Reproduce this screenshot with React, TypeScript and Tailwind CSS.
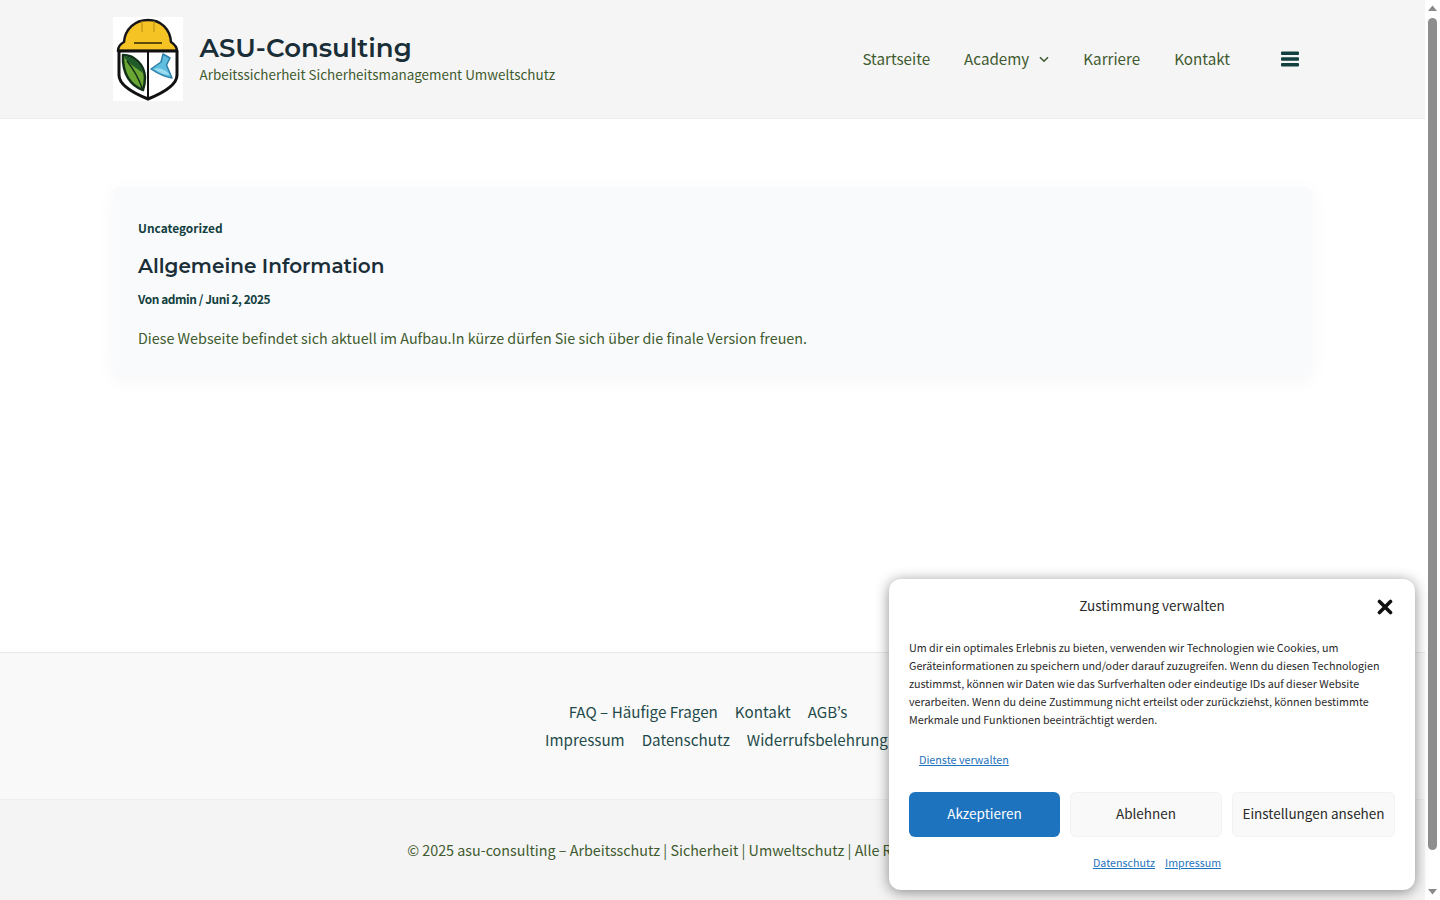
const sans = "font-['Noto_Sans_CJK_KR','Noto_Sans',sans-serif]";

function Logo() {
  return (
    <div className="flex h-[84px] w-[70px] shrink-0 items-center justify-center bg-white">
      <svg width="70" height="84" viewBox="0 0 70 84">
        <path d="M5 34 C5 30 7 27 11 25 C12 12 22 3 35 3 C48 3 57 12 58 25 C61 27 64 30 64 34 Z" fill="#f6c325" stroke="#16161a" strokeWidth="2.5" strokeLinejoin="round" />
        <path d="M29 4 L29 15 M41 4 L41 15" stroke="#c2951b" strokeWidth="1.2" />
        <path d="M21 26 H49" stroke="#5f4b0e" strokeWidth="2" />
        <path d="M6 34 H64 V58 C64 68 50 76 35 82 C20 76 6 68 6 58 Z" fill="#ffffff" stroke="#111114" strokeWidth="3" strokeLinejoin="round" />
        <path d="M35 34 V81" stroke="#111114" strokeWidth="2" />
        <path d="M10 38 C21 38 31 47 32 60 C32 66 31 70 30 73 C18 69 9 57 10 38 Z" fill="#6aa733" stroke="#12301a" strokeWidth="2.5" strokeLinejoin="round" />
        <path d="M11 39 C21 40 28 47 30 56 C22 50 14 46 11 39 Z" fill="#1f5a2b" />
        <path d="M14 44 C21 53 26 62 29 71" stroke="#12301a" strokeWidth="1.4" fill="none" />
        <path d="M50 37 L57 41 L53.5 48 L59 61 C52 60 44 56 38 52 L48 45 Z" fill="#5fbde0" stroke="#2c7fa6" strokeWidth="1.5" strokeLinejoin="round" />
        <path d="M41 52 C46 50 52 52 57 58 C51 58 46 55 41 52 Z" fill="#9adcf0" />
      </svg>
    </div>
  );
}

function Scrollbar() {
  return (
    <div className="flex h-[900px] w-[15px] shrink-0 flex-col items-center bg-white">
      <svg width="15" height="15" viewBox="0 0 15 15" className="shrink-0">
        <path d="M3 11 L7.5 5.5 L12 11 Z" fill="#8a8a8a" />
      </svg>
      <div className="mt-[3px] h-[832px] w-[9px] shrink-0 rounded-full bg-[#8e8e8e]" />
      <div className="flex-1" />
      <svg width="15" height="15" viewBox="0 0 15 15" className="shrink-0">
        <path d="M3 4 L7.5 9.5 L12 4 Z" fill="#8a8a8a" />
      </svg>
    </div>
  );
}

function Header() {
  return (
    <header className="flex h-[119px] items-center justify-between border-b border-[#eeeeee] bg-[#f5f5f5] pl-[113px] pr-[126px]">
      <div className="flex items-center gap-[16px]">
        <Logo />
        <div>
          <div className="pl-[0.5px] font-['Montserrat','Inter',sans-serif] text-[26px] font-semibold leading-[30px] text-[#1a2e38]">ASU-Consulting</div>
          <div className="pl-[0.5px] text-[13.45px] leading-[22px] text-[#3f5a2f]">Arbeitssicherheit Sicherheitsmanagement Umweltschutz</div>
        </div>
      </div>
      <nav className="flex items-center text-[15.2px] text-[#3f5a2f]">
        <a className="mr-[34px] pb-[2px]">Startseite</a>
        <a className="mr-[34px] flex items-center gap-[10px] pb-[2px]">
          Academy
          <svg className="mt-[4px]" width="10" height="7" viewBox="0 0 10 7" fill="none" stroke="#3f5a2f" strokeWidth="1.6"><path d="M1 1.2 L5 5.2 L9 1.2" /></svg>
        </a>
        <a className="mr-[34px] pb-[2px]">Karriere</a>
        <a className="mr-[51px] pb-[2px]">Kontakt</a>
        <svg width="18" height="16" viewBox="0 0 18 16" fill="#12403e">
          <rect x="0" y="0.5" width="18" height="3.6" rx="1" />
          <rect x="0" y="6.2" width="18" height="3.6" rx="1" />
          <rect x="0" y="11.9" width="18" height="3.6" rx="1" />
        </svg>
      </nav>
    </header>
  );
}

function Article() {
  return (
    <main className="h-[533px] px-[113px] pt-[68px]">
      <article className="h-[190px] rounded-[6px] bg-[#f9fafc] px-[25px] pt-[31px] shadow-[0_4px_20px_rgba(0,0,0,0.04)]">
        <div className="text-[11.9px] font-semibold leading-[20px] text-[#12403e]">Uncategorized</div>
        <h2 className="mt-[13px] font-['Montserrat','Inter',sans-serif] text-[20px] font-semibold leading-[30px] text-[#1a2e38]">Allgemeine Information</h2>
        <div className="mt-[8px] text-[11.9px] font-semibold leading-[20px] tracking-[-0.42px] text-[#12403e]">Von admin / Juni 2, 2025</div>
        <p className="mt-[19px] text-[14.32px] leading-[20px] text-[#3f5a2f]">Diese Webseite befindet sich aktuell im Aufbau.In kürze dürfen Sie sich über die finale Version freuen.</p>
      </article>
    </main>
  );
}

function Footer() {
  return (
    <footer className="bg-[#f9f9f9]">
      <div className="h-[147px] border-t border-[#e8e8e8] pt-[44px] text-center text-[15.2px] leading-[28px] text-[#1f4a4a]">
        <div className="flex justify-center gap-[17px] pr-[9px]"><a>FAQ – Häufige Fragen</a><a>Kontakt</a><a>AGB’s</a></div>
        <div className="flex justify-center gap-[17px] pl-[8px]"><a>Impressum</a><a>Datenschutz</a><a>Widerrufsbelehrung</a></div>
      </div>
      <div className="h-[101px] border-t border-[#eeeeee] bg-[#f4f4f4] pr-[5px] pt-[38px] text-center text-[14.32px] leading-[24px] text-[#3f5a2f]">
        © 2025 asu-consulting – Arbeitsschutz | Sicherheit | Umweltschutz | Alle Rechte vorbehalten
      </div>
    </footer>
  );
}

function Consent() {
  return (
    <div className="absolute left-[889px] top-[579px] h-[311px] w-[526px] rounded-[12px] bg-white px-[20px] shadow-[0_2px_14px_rgba(0,0,0,0.45)]">
      <div className="relative pt-[16px] text-center text-[13.5px] leading-[20px] text-[#2a2a2a]">
        Zustimmung verwalten
        <svg className="absolute right-[2px] top-[20px]" width="16" height="16" viewBox="0 0 16 16" stroke="#111" strokeWidth="3.6" strokeLinecap="round"><path d="M2.5 2.5 L13.5 13.5 M13.5 2.5 L2.5 13.5" /></svg>
      </div>
      <p className="mt-[24px] text-[10.75px] leading-[18px] text-[#2a2a2a]">
        Um dir ein optimales Erlebnis zu bieten, verwenden wir Technologien wie Cookies, um Geräteinformationen zu speichern und/oder darauf zuzugreifen. Wenn du diesen Technologien zustimmst, können wir Daten wie das Surfverhalten oder eindeutige IDs auf dieser Website verarbeiten. Wenn du deine Zustimmung nicht erteilst oder zurückziehst, können bestimmte Merkmale und Funktionen beeinträchtigt werden.
      </p>
      <div className="ml-[10px] mt-[21px] text-[10.75px] leading-[20px] text-[#1e73be] underline">Dienste verwalten</div>
      <div className="mt-[22px] flex gap-[10px]">
        <button className="h-[45px] w-[151px] rounded-[6px] bg-[#1e73be] pb-[2px] text-[13.5px] text-white">Akzeptieren</button>
        <button className="h-[45px] w-[152px] rounded-[6px] border border-[#f2f2f2] bg-[#f9f9f9] pb-[2px] text-[13.5px] text-[#2a2a2a]">Ablehnen</button>
        <button className="h-[45px] w-[163px] rounded-[6px] border border-[#f2f2f2] bg-[#f9f9f9] pb-[2px] text-[13.5px] text-[#2a2a2a]">Einstellungen ansehen</button>
      </div>
      <div className="mt-[16px] flex justify-center gap-[10px] pl-[10px] text-[10.7px] leading-[20px] text-[#1e73be] underline">
        <a>Datenschutz</a><a>Impressum</a>
      </div>
    </div>
  );
}

export default function App() {
  return (
    <div className={`relative flex h-[900px] w-[1440px] overflow-hidden bg-white ${sans}`}>
      <div className="w-[1425px] shrink-0">
        <Header />
        <Article />
        <Footer />
      </div>
      <Scrollbar />
      <Consent />
    </div>
  );
}
